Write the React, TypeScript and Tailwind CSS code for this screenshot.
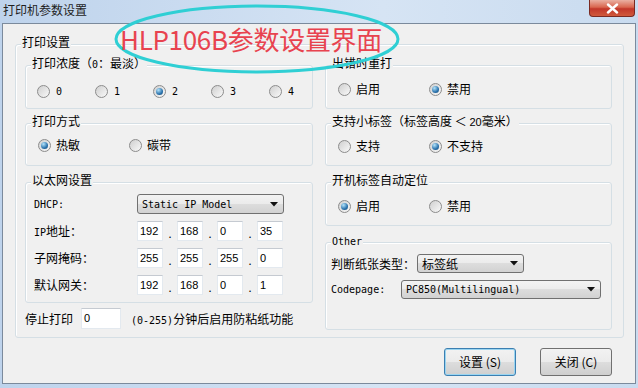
import type { ReactNode } from 'react'

const DENSITY = ['0', '1', '2', '3', '4']

function Radio({ checked }: { checked?: boolean }) {
  return (
    <span className="w-[13px] h-[13px] shrink-0 rounded-full border border-[#8c8c8c] bg-[linear-gradient(135deg,#cfcfcf,#f9f9f9)] flex items-center justify-center">
      {checked && (
        <span className="w-[7px] h-[7px] rounded-full bg-[radial-gradient(circle_at_35%_30%,#b4e4fb,#2b73ad_60%,#17466f)]" />
      )}
    </span>
  )
}

function Option({ label, checked, width, mono }: { label: string; checked?: boolean; width: string; mono?: boolean }) {
  return (
    <div className={`flex items-center shrink-0 ${width}`}>
      <Radio checked={checked} />
      <span className={mono ? "ml-[6px] font-['DejaVu_Sans_Mono',monospace] text-[10px]" : 'ml-[5px]'}>{label}</span>
    </div>
  )
}

function Group({ label, className, children }: { label: ReactNode; className: string; children?: ReactNode }) {
  return (
    <div className={`border border-[#d5dfe5] rounded-[3px] shadow-[inset_1px_1px_0_#ffffff] ${className}`}>
      <div className="-mt-[10px] ml-[5px] w-fit px-[1px] bg-[#f0f0f0] leading-[14px]">{label}</div>
      {children}
    </div>
  )
}

function Arrow() {
  return (
    <svg width="8" height="5" viewBox="0 0 8 5" className="shrink-0">
      <polygon points="0,0 8,0 4,4.5" fill="#111" />
    </svg>
  )
}

function Select({ value, className, mono }: { value: string; className: string; mono?: boolean }) {
  return (
    <div
      className={`flex items-center justify-between border border-[#707070] rounded-[3px] bg-[linear-gradient(#f3f3f3,#ebebeb_50%,#dddddd_50%,#d2d2d2)] pl-[4px] pr-[5px] ${className}`}
    >
      <span className={mono ? "font-['DejaVu_Sans_Mono',monospace] text-[10px]" : 'leading-[14px]'}>{value}</span>
      <Arrow />
    </div>
  )
}

function Field({ value, className }: { value: string; className: string }) {
  return (
    <div
      className={`bg-white border border-[#e3e9ef] border-t-[#c5cad1] pl-[2px] flex items-center font-['Liberation_Sans',sans-serif] text-[11px] ${className}`}
    >
      {value}
    </div>
  )
}

function IpRow({ label, parts }: { label: ReactNode; parts: string[] }) {
  return (
    <div className="flex items-center mt-[7px] h-[20px] pl-[8px]">
      <div className="w-[103px]">{label}</div>
      <div className="flex">
        {parts.map((p, i) => (
          <div key={i} className="flex items-end">
            {i > 0 && <span className="w-[14px] text-center text-[11px] leading-[16px]">.</span>}
            <Field value={p} className="w-[26px] h-[20px]" />
          </div>
        ))}
      </div>
    </div>
  )
}

function Button({ children, primary }: { children: ReactNode; primary?: boolean }) {
  return (
    <div
      className={`w-[72px] h-[28px] rounded-[3px] border flex items-center justify-center bg-[linear-gradient(#f2f2f2,#ebebeb_50%,#dddddd_50%,#cfcfcf)] ${
        primary ? 'border-[#3c7fb1] shadow-[inset_0_0_0_1px_#9ad5f1]' : 'border-[#707070]'
      }`}
    >
      {children}
    </div>
  )
}

export default function App() {
  return (
    <div className="relative w-[638px] h-[388px] overflow-hidden bg-[linear-gradient(90deg,#bed3ec,#d6e4f4_60%,#c9dbef)] text-[12px] text-black font-['Noto_Sans_CJK_SC',sans-serif] flex flex-col">
      {/* title bar */}
      <div className="h-[23px] flex items-start justify-between">
        <div className="pl-[3px] pt-[3px] leading-[14px] text-[#1e1e1e]">打印机参数设置</div>
        <div className="mr-[3px] w-[46px] h-[17px] rounded-b-[4px] border border-t-0 border-[#7a2a22] bg-[linear-gradient(#eab0a2,#d9664f_45%,#c2372a_55%,#d05a3c)] flex items-center justify-center">
          <svg width="13" height="11" viewBox="0 0 13 11">
            <path d="M2 1.5 L11 9.5 M11 1.5 L2 9.5" stroke="#fff" strokeWidth="2.4" strokeLinecap="round" />
          </svg>
        </div>
      </div>

      {/* client area */}
      <div className="mx-[2px] h-[361px] bg-[#f0f0f0] border border-[#7b8a9c] pl-[12px] pr-[11px] pt-[20px]">
        <Group label="打印设置" className="h-[294px]">
          <div className="mt-[16px] pl-[9px] grid grid-cols-[288px_287px] gap-x-[12px]">
            {/* left column */}
            <div className="flex flex-col">
              <Group label={<>打印浓度（<span className="font-['DejaVu_Sans_Mono',monospace] text-[10px]">0</span>：最淡）</>} className="h-[44px]">
                <div className="flex items-center h-[16px] mt-[11px] pl-[11px]">
                  {DENSITY.map((d) => (
                    <Option key={d} label={d} checked={d === '2'} width={d === '4' ? 'w-auto' : 'w-[58px]'} mono />
                  ))}
                </div>
              </Group>
              <Group label="打印方式" className="h-[43px] mt-[14px]">
                <div className="flex items-center h-[16px] mt-[9px] pl-[12px]">
                  <Option label="热敏" checked width="w-[91px]" />
                  <Option label="碳带" width="w-[91px]" />
                </div>
              </Group>
              <Group label="以太网设置" className="h-[121px] mt-[16px]">
                <div className="flex items-center mt-[7px] h-[20px] pl-[8px]">
                  <div className="w-[103px] font-['DejaVu_Sans_Mono',monospace] text-[10px]">DHCP:</div>
                  <Select value="Static IP Model" className="w-[147px] h-[20px]" mono />
                </div>
                <IpRow label={<><span className="font-['DejaVu_Sans_Mono',monospace] text-[10px]">IP</span>地址：</>} parts={['192', '168', '0', '35']} />
                <IpRow label="子网掩码：" parts={['255', '255', '255', '0']} />
                <IpRow label="默认网关：" parts={['192', '168', '0', '1']} />
              </Group>
              <div className="flex items-center mt-[5px] h-[21px]">
                <span className="w-[48px]">停止打印</span>
                <Field value="0" className="ml-[8px] w-[40px] h-[21px]" />
                <span className="ml-[10px]">
                  <span className="font-['DejaVu_Sans_Mono',monospace] text-[10px]">(0-255)</span>分钟后启用防粘纸功能
                </span>
              </div>
            </div>

            {/* right column */}
            <div className="flex flex-col">
              <Group label="出错时重打" className="h-[44px]">
                <div className="flex items-center h-[16px] mt-[11px] pl-[12px]">
                  <Option label="启用" width="w-[91px]" />
                  <Option label="禁用" checked width="w-[91px]" />
                </div>
              </Group>
              <Group label={<>支持小标签（标签高度 ＜ <span className="font-['Liberation_Sans',sans-serif] text-[11px]">20</span>毫米）</>} className="h-[43px] mt-[14px]">
                <div className="flex items-center h-[16px] mt-[9px] pl-[12px]">
                  <Option label="支持" width="w-[91px]" />
                  <Option label="不支持" checked width="w-[91px]" />
                </div>
              </Group>
              <Group label="开机标签自动定位" className="h-[44px] mt-[16px]">
                <div className="flex items-center h-[16px] mt-[11px] pl-[12px]">
                  <Option label="启用" checked width="w-[91px]" />
                  <Option label="禁用" width="w-[91px]" />
                </div>
              </Group>
              <Group label={<span className="font-['DejaVu_Sans_Mono',monospace] text-[10px]">Other</span>} className="h-[88px] mt-[16px]">
                <div className="flex items-center mt-[5px] pl-[5px]">
                  <span className="w-[86px]">判断纸张类型：</span>
                  <Select value="标签纸" className="w-[107px] h-[19px]" />
                </div>
                <div className="flex items-center mt-[7px] pl-[5px]">
                  <span className="w-[70px] font-['DejaVu_Sans_Mono',monospace] text-[10px]">Codepage:</span>
                  <Select value="PC850(Multilingual)" className="w-[200px] h-[19px]" mono />
                </div>
              </Group>
            </div>
          </div>
        </Group>

        <div className="flex justify-end gap-[24px] mt-[10px] pr-[12px]">
          <Button primary>设置 (S)</Button>
          <Button>关闭 (C)</Button>
        </div>
      </div>

      {/* annotation over the window */}
      <svg className="absolute left-0 top-0 pointer-events-none" width="638" height="388">
        <ellipse cx="257" cy="39" rx="141" ry="33" fill="none" stroke="#2fcfd4" strokeWidth="3" />
      </svg>
      <div className="absolute left-[120px] top-[23px] text-[26px] leading-[32px] tracking-[-0.3px] text-[#e8434f] pointer-events-none">
        HLP106B参数设置界面
      </div>
    </div>
  )
}
